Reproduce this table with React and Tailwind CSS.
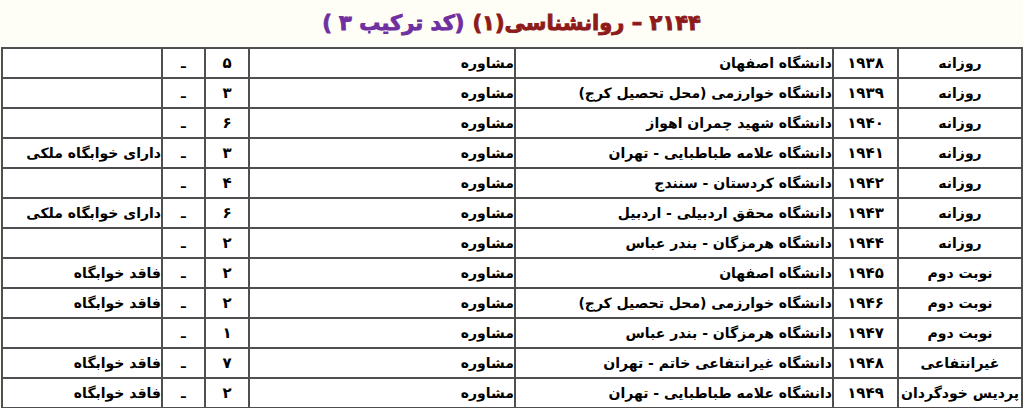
const rows = [
  ['روزانه', '۱۹۳۸', 'دانشگاه اصفهان', '۵', ''],
  ['روزانه', '۱۹۳۹', 'دانشگاه خوارزمی (محل تحصیل کرج)', '۳', ''],
  ['روزانه', '۱۹۴۰', 'دانشگاه شهید چمران اهواز', '۶', ''],
  ['روزانه', '۱۹۴۱', 'دانشگاه علامه طباطبایی - تهران', '۳', 'دارای خوابگاه ملکی'],
  ['روزانه', '۱۹۴۲', 'دانشگاه کردستان - سنندج', '۴', ''],
  ['روزانه', '۱۹۴۳', 'دانشگاه محقق اردبیلی - اردبیل', '۶', 'دارای خوابگاه ملکی'],
  ['روزانه', '۱۹۴۴', 'دانشگاه هرمزگان - بندر عباس', '۲', ''],
  ['نوبت دوم', '۱۹۴۵', 'دانشگاه اصفهان', '۲', 'فاقد خوابگاه'],
  ['نوبت دوم', '۱۹۴۶', 'دانشگاه خوارزمی (محل تحصیل کرج)', '۲', 'فاقد خوابگاه'],
  ['نوبت دوم', '۱۹۴۷', 'دانشگاه هرمزگان - بندر عباس', '۱', ''],
  ['غیرانتفاعی', '۱۹۴۸', 'دانشگاه غیرانتفاعی خاتم - تهران', '۷', 'فاقد خوابگاه'],
  ['پردیس خودگردان', '۱۹۴۹', 'دانشگاه علامه طباطبایی - تهران', '۲', 'فاقد خوابگاه'],
];

const cell = 'h-[30px] border-2 border-[#4f4f4f] p-0 align-middle';

export default function App() {
  return (
    <div
      className="h-[408px] w-[1023px] overflow-hidden bg-[#fffef6] text-black"
      style={{ fontFamily: '"DejaVu Sans", sans-serif' }}
    >
      <h1
        dir="rtl"
        className="flex h-[47px] items-center justify-center text-[21px] font-bold leading-none [-webkit-text-stroke:0.9px_currentColor]"
      >
        <span className="text-[#8e1b1b]">۲۱۴۴ – روانشناسی(۱)</span>
        <span className="mr-[8px] text-[#7030a0]">(کد ترکیب ۳ )</span>
      </h1>

      <table dir="rtl" className="ml-[1px] w-[1020px] table-fixed border-collapse bg-white text-[14px] font-bold">
        <colgroup>
          <col className="w-[124px]" />
          <col className="w-[65px]" />
          <col className="w-[318px]" />
          <col className="w-[266px]" />
          <col className="w-[44px]" />
          <col className="w-[43px]" />
          <col className="w-[160px]" />
        </colgroup>
        <tbody>
          {rows.map(([type, code, uni, count, note]) => (
            <tr key={code}>
              <td className={`${cell} text-center`}>{type}</td>
              <td className={`${cell} text-center text-[15px] tracking-[1px]`}>{code}</td>
              <td className={`${cell} whitespace-nowrap text-right`}>{uni}</td>
              <td className={`${cell} text-right`}>مشاوره</td>
              <td className={`${cell} text-center text-[15px]`}>{count}</td>
              <td className={`${cell} text-center`}>ـ</td>
              <td className={`${cell} whitespace-nowrap text-right`}>{note}</td>
            </tr>
          ))}
        </tbody>
      </table>
    </div>
  );
}
